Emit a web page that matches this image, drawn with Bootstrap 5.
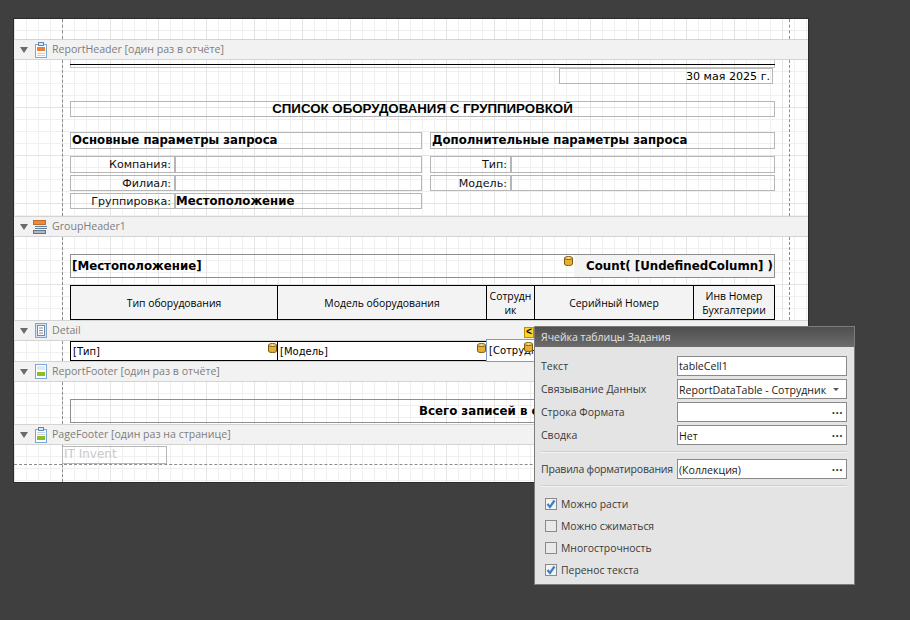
<!DOCTYPE html>
<html lang="ru">

<head>
    <meta charset="UTF-8">
    <title>Дизайнер отчётов</title>
    <link href="https://cdn.jsdelivr.net/npm/bootstrap@5.3.3/dist/css/bootstrap.min.css" rel="stylesheet">
    <style>
        body { background: #3f3f3f; margin: 0; height: 620px; overflow: hidden; font-family: "DejaVu Sans", sans-serif; color: #000; }
        .stage { position: relative; width: 910px; height: 620px; padding: 19px 0 0 14px; }
        .sheet { width: 794px; height: 463px; background: #fff; box-shadow: 0 0 0 1px #2b2b2b; }

        /* --- полосы --- */
        .strip { height: 21px; background: #f2f2f2; border-top: 1px solid #d4d4d4; border-bottom: 1px solid #d4d4d4; color: #7d7d7d; font: 10.6px/19px "Open Sans", sans-serif; padding-left: 6px; gap: 5px; }
        .strip-icon { width: 14px; flex: none; margin-left: 0; justify-content: flex-end; }
        .toggle { width: 0; height: 0; border-left: 4px solid transparent; border-right: 4px solid transparent; border-top: 6px solid #6b6b6b; }
        .area { position: relative; display: flow-root; background-color: #fff;
            background-image: linear-gradient(#e4e4e4 1px, transparent 1px), linear-gradient(90deg, #e4e4e4 1px, transparent 1px), linear-gradient(#f0f0f0 1px, transparent 1px), linear-gradient(90deg, #f0f0f0 1px, transparent 1px);
            background-size: 48px 48px, 48px 48px, 12px 12px, 12px 12px;
            background-position: 0 47px, 0 0, 0 47px, 0 0; padding-left: 56px; }
        .area::before, .area::after { content: ""; position: absolute; top: 0; bottom: 0; border-left: 1px dashed #8c8c8c; }
        .area::before { left: 48px; }
        .area::after { left: 775px; }
        .area-top { height: 20px; }
        .area-header { height: 156px; }
        .area-group { height: 83px; padding-top: 17px; }
        .area-detail { height: 20px; }
        .area-footer { height: 42px; padding-top: 17px; }
        .area-page { height: 37px; padding: 1px 0 0 48px; }
        .guide-h { position: absolute; left: 0; right: 0; top: 19px; border-top: 1px dashed #8c8c8c; }

        /* --- элементы отчёта --- */
        .cell { position: relative; border: 1px solid #b6b6b6; font-size: 11.1px; line-height: 15px; white-space: nowrap; overflow: hidden; }
        .rule-box { width: 705px; height: 8px; border: 1px solid #c4c4c4; border-top: 0; }
        .rule-line { height: 1px; width: 705px; background: #000; margin-top: 4px; margin-bottom: -5px; position: relative; }
        .date-box { width: 214px; height: 16px; margin: 0 0 17px 489px; text-align: right; padding-right: 2px; }
        .title-box { width: 705px; height: 16px; margin-bottom: 15px; text-align: center; font: bold 13.3px/14px "Liberation Sans", sans-serif; }
        .head-box { height: 17px; font-size: 11.75px; font-weight: bold; padding-left: 1px; }
        .w-left { width: 352px; }
        .w-right { width: 345px; margin-left: 8px; }
        .params { margin-bottom: 7px; }
        .param-row { margin-bottom: 2px; height: 16px; }
        .param-first { height: 17px; }
        .lbl { text-align: right; padding-right: 3px; color: #111; }
        .lbl-a { width: 105px; }
        .val-a { width: 247px; font-size: 11.75px; font-weight: bold; }
        .lbl-b { width: 81px; margin-left: 8px; }
        .val-b { width: 264px; }
        .bold-box { width: 705px; height: 24px; border: 1px solid #8e8e8e; font: bold 11.8px/22px "DejaVu Sans", sans-serif; padding-left: 1px; margin-bottom: 7px; }
        .count-part { position: absolute; right: 0; top: 0; bottom: 0; width: 200px; background: #f3f3f3; padding-right: 1px; text-align: right; }
        .tbl-head { width: 705px; height: 35px; background: #f3f3f3; border: 1px solid #000; font: 10.4px/14px "Open Sans", sans-serif; }
        .tbl-head > div { display: flex; align-items: center; justify-content: center; text-align: center; border-right: 1px solid #000; }
        .tbl-head > div:last-child { border-right: 0; }
        .c1 { width: 207px; }
        .c2 { width: 209px; }
        .c3 { width: 48px; word-break: break-all; }
        .c4 { width: 159px; }
        .c5 { flex: 1; }
        .tbl-row { width: 705px; height: 20px; background: #fff; border: 1px solid #000; font: 10px/19px "DejaVu Sans", sans-serif; }
        .tbl-row > div { position: relative; padding-left: 2px; border-right: 1px solid #000; }
        .selected-cell { position: absolute; left: 472px; top: -2px; width: 50px; height: 23px; border: 1px solid #7d9ec4; background: #fff; font: 10px/22px "DejaVu Sans", sans-serif; padding-left: 2px; overflow: hidden; white-space: nowrap; }
        .db { position: absolute; }
        .db-1 { right: 0; top: 1px; }
        .db-sel { left: 37px; top: 2px; }
        .db-count { left: 493px; top: 1px; }
        .smart-tag { position: absolute; left: 524px; top: 327px; width: 10px; height: 11px; background: #ffd42a; border: 1px solid #b59400; font: bold 10px/9px "Liberation Mono", monospace; text-align: center; }
        .footer-box { width: 705px; height: 24px; border: 1px solid #8e8e8e; font: bold 11.8px/22px "DejaVu Sans", sans-serif; padding-left: 348px; white-space: nowrap; overflow: hidden; }
        .invent-box { width: 105px; height: 18px; color: #c8c8c8; padding-left: 1px; font-size: 12px; }

        /* --- всплывающая панель --- */
        .tasks { position: absolute; left: 534px; top: 326px; width: 321px; height: 259px; border: 1px solid #7c7c7c; border-radius: 0; background: #e4e4e4; color: #3a3a3a; font: 10.5px/15px "Open Sans", sans-serif; --bs-card-border-radius: 0; --bs-card-inner-border-radius: 0; }
        .tasks-title { height: 20px; padding: 3px 6px 0; background: linear-gradient(#4f4f4f, #6c6c6c); border: 0; border-radius: 0 !important; color: #e3e3e3; font-size: 10.5px; }
        .tasks-body { padding: 9px 7px 0 6px; flex: none; }
        .task-row { height: 20px; margin-bottom: 3px; }
        .task-label { width: 136px; white-space: nowrap; }
        .task-label-tight { letter-spacing: -.2px; }
        .task-input { width: 170px; height: 20px; min-height: 0; padding: 1px 3px 0 1px; border: 1px solid #8a8a8a; border-radius: 0; background: #fff; color: #1a1a1a; font-size: 10.6px; line-height: 16px; white-space: nowrap; }
        .dots { font-weight: bold; font-size: 11.5px; letter-spacing: .5px; color: #333; line-height: 12px; }
        .caret-down { width: 0; height: 0; border-left: 3px solid transparent; border-right: 3px solid transparent; border-top: 3px solid #555; margin-right: 4px; }
        .sep { height: 2px; background: #f4f4f4; border-top: 1px solid #cfcfcf; margin: 6px 0; opacity: 1; }
        .checks { padding: 0 0 0 4px; }
        .chk-row { height: 22px; min-height: 0; margin: 0; padding: 0; gap: 4px; font-size: 10.4px; }
        .chk-row .form-check-input { float: none; margin: 0; width: 12px; height: 12px; border-radius: 0; border: 1px solid #8a8a8a; background-color: #e9e9e9; }
        .chk-row .form-check-input:checked { background-color: #f2f2f2; border-color: #8a8a8a;
            background-image: url("data:image/svg+xml,%3csvg xmlns='http://www.w3.org/2000/svg' viewBox='0 0 12 12'%3e%3cpath fill='none' stroke='%233f7fc4' stroke-width='2.2' d='M2.5 6l2.5 3 4.5-6.5'/%3e%3c/svg%3e"); background-size: 12px 12px; }
        .chk-row .form-check-label { opacity: 1; color: #3a3a3a; }
    </style>
</head>

<body>
    <svg width="0" height="0" class="d-block">
        <defs>
            <symbol id="ico-db" viewBox="0 0 9 10">
                <path d="M.5 2v6c0 1 1.800 1.500 4 1.500s4-.5 4-1.500V2z" fill="#e6b035" stroke="#7a5a10"/>
                <ellipse cx="4.500" cy="2" rx="4" ry="1.500" fill="#f7dc86" stroke="#7a5a10"/>
            </symbol>
        </defs>
    </svg>

    <div class="stage">
        <div class="sheet">
            <div class="area area-top"></div>

            <div class="strip d-flex align-items-center">
                <span class="toggle"></span>
                <span class="strip-icon d-flex">
                    <svg width="12" height="16" viewBox="0 0 12 16"><rect x=".5" y="2.500" width="11" height="13" fill="#fff" stroke="#7aa7d6"/><rect x="3.500" y=".5" width="5" height="3" fill="#dce8f4" stroke="#5f86b0"/><rect x="2" y="5" width="8" height="4" fill="#ee7f33"/><path d="M2 11.500h8M2 13.500h8" stroke="#c3d0dd"/></svg>
                </span>
                <span>ReportHeader [один раз в отчёте]</span>
            </div>
            <div class="area area-header">
                <div class="rule-line"></div>
                <div class="rule-box"></div>
                <div class="cell date-box">30 мая 2025 г.</div>
                <div class="cell title-box">СПИСОК ОБОРУДОВАНИЯ С ГРУППИРОВКОЙ</div>
                <div class="d-flex params">
                    <div class="cell head-box w-left">Основные параметры запроса</div>
                    <div class="cell head-box w-right">Дополнительные параметры запроса</div>
                </div>
                <div class="d-flex param-row param-first">
                    <div class="cell lbl lbl-a">Компания:</div>
                    <div class="cell val-a"></div>
                    <div class="cell lbl lbl-b">Тип:</div>
                    <div class="cell val-b"></div>
                </div>
                <div class="d-flex param-row">
                    <div class="cell lbl lbl-a">Филиал:</div>
                    <div class="cell val-a"></div>
                    <div class="cell lbl lbl-b">Модель:</div>
                    <div class="cell val-b"></div>
                </div>
                <div class="d-flex param-row">
                    <div class="cell lbl lbl-a">Группировка:</div>
                    <div class="cell val-a">Местоположение</div>
                </div>
            </div>

            <div class="strip d-flex align-items-center">
                <span class="toggle"></span>
                <span class="strip-icon d-flex">
                    <svg width="14" height="14" viewBox="0 0 14 14"><rect x=".5" y=".5" width="12" height="4" fill="#ee8a3c" stroke="#c46a24"/><path d="M2 6.500h12M2 8.500h12" stroke="#5b7fa3"/><rect x=".5" y="10.500" width="12" height="3" fill="#aeb9c4" stroke="#6c7480"/></svg>
                </span>
                <span>GroupHeader1</span>
            </div>
            <div class="area area-group">
                <div class="cell bold-box">[Местоположение]
                    <svg class="db db-count" width="9" height="10"><use href="#ico-db"/></svg>
                    <div class="count-part">Count( [UndefinedColumn] )</div>
                </div>
                <div class="d-flex tbl-head">
                    <div class="c1">Тип оборудования</div>
                    <div class="c2">Модель оборудования</div>
                    <div class="c3">Сотрудник</div>
                    <div class="c4">Серийный Номер</div>
                    <div class="c5">Инв Номер Бухгалтерии</div>
                </div>
            </div>

            <div class="strip d-flex align-items-center">
                <span class="toggle"></span>
                <span class="strip-icon d-flex">
                    <svg width="12" height="15" viewBox="0 0 12 15"><rect x=".5" y=".5" width="11" height="14" fill="#d6e4f3" stroke="#7aa7d6"/><rect x="2.500" y="2.500" width="7" height="10" fill="#fff" stroke="#7d8894"/><path d="M4 5h4M4 7.500h4M4 10h4" stroke="#7d8894"/></svg>
                </span>
                <span>Detail</span>
            </div>
            <div class="area area-detail">
                <div class="d-flex tbl-row">
                    <div class="c1">[Тип]<svg class="db db-1" width="9" height="10"><use href="#ico-db"/></svg></div>
                    <div class="c2">[Модель]<svg class="db db-1" width="9" height="10"><use href="#ico-db"/></svg></div>
                </div>
                <div class="selected-cell">[Сотрудник]<svg class="db db-sel" width="9" height="10"><use href="#ico-db"/></svg></div>
            </div>

            <div class="strip d-flex align-items-center">
                <span class="toggle"></span>
                <span class="strip-icon d-flex">
                    <svg width="12" height="15" viewBox="0 0 12 15"><rect x=".5" y=".5" width="11" height="14" fill="#fff" stroke="#7aa7d6"/><path d="M2 3h8M2 5h8" stroke="#c3d0dd"/><rect x="2" y="8" width="8" height="4" fill="#8cbf26"/></svg>
                </span>
                <span>ReportFooter [один раз в отчёте]</span>
            </div>
            <div class="area area-footer">
                <div class="footer-box">Всего записей в с</div>
            </div>

            <div class="strip d-flex align-items-center">
                <span class="toggle"></span>
                <span class="strip-icon d-flex">
                    <svg width="12" height="16" viewBox="0 0 12 16"><rect x=".5" y="2.500" width="11" height="13" fill="#fff" stroke="#7aa7d6"/><rect x="3.500" y=".5" width="5" height="3" fill="#dce8f4" stroke="#5f86b0"/><path d="M2 5.500h8M2 7.500h8" stroke="#c3d0dd"/><rect x="2" y="9" width="8" height="4" fill="#8cbf26"/></svg>
                </span>
                <span>PageFooter [один раз на странице]</span>
            </div>
            <div class="area area-page">
                <div class="cell invent-box">IT Invent</div>
                <div class="guide-h"></div>
            </div>
        </div>

        <div class="card tasks">
            <div class="card-header tasks-title">Ячейка таблицы Задания</div>
            <div class="card-body tasks-body">
                <div class="d-flex align-items-center task-row">
                    <div class="task-label">Текст</div>
                    <div class="form-control task-input">tableCell1</div>
                </div>
                <div class="d-flex align-items-center task-row">
                    <div class="task-label">Связывание Данных</div>
                    <div class="form-control task-input d-flex justify-content-between align-items-center">ReportDataTable - Сотрудник<span class="caret-down"></span></div>
                </div>
                <div class="d-flex align-items-center task-row">
                    <div class="task-label">Строка Формата</div>
                    <div class="form-control task-input d-flex justify-content-end align-items-center"><span class="dots">···</span></div>
                </div>
                <div class="d-flex align-items-center task-row">
                    <div class="task-label">Сводка</div>
                    <div class="form-control task-input d-flex justify-content-between align-items-center">Нет<span class="dots">···</span></div>
                </div>
                <div class="sep"></div>
                <div class="d-flex align-items-center task-row">
                    <div class="task-label task-label-tight">Правила форматирования</div>
                    <div class="form-control task-input d-flex justify-content-between align-items-center">(Коллекция)<span class="dots">···</span></div>
                </div>
                <div class="sep"></div>
                <div class="checks">
                    <div class="form-check d-flex align-items-center chk-row"><input class="form-check-input" type="checkbox" id="chkGrow" checked><label class="form-check-label" for="chkGrow">Можно расти</label></div>
                    <div class="form-check d-flex align-items-center chk-row"><input class="form-check-input" type="checkbox" id="chkShrink"><label class="form-check-label" for="chkShrink">Можно сжиматься</label></div>
                    <div class="form-check d-flex align-items-center chk-row"><input class="form-check-input" type="checkbox" id="chkMulti"><label class="form-check-label" for="chkMulti">Многострочность</label></div>
                    <div class="form-check d-flex align-items-center chk-row"><input class="form-check-input" type="checkbox" id="chkWrap" checked><label class="form-check-label" for="chkWrap">Перенос текста</label></div>
                </div>
            </div>
        </div>

        <div class="smart-tag">&lt;</div>
    </div>

    <script src="https://cdn.jsdelivr.net/npm/bootstrap@5.3.3/dist/js/bootstrap.bundle.min.js"></script>
</body>

</html>
